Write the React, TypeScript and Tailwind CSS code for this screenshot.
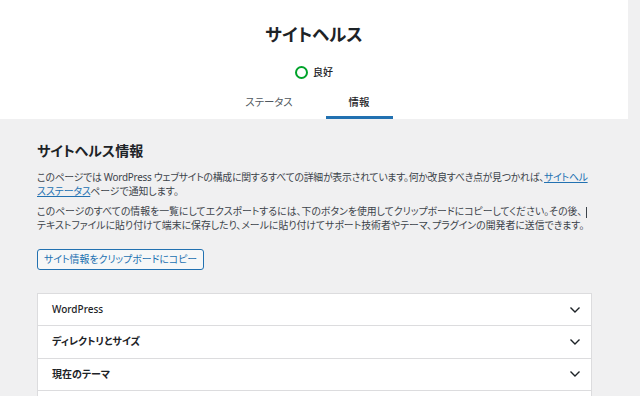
import type { JSX } from "react";

const sections = [
  "WordPress",
  "ディレクトリとサイズ",
  "現在のテーマ",
  "有効化中のプラグイン",
];

function Chevron(): JSX.Element {
  return (
    <svg width="12" height="8" viewBox="0 0 12 8" fill="none">
      <path d="M1.5 1.5L6 6L10.5 1.5" stroke="#1d2327" strokeWidth="1.4" />
    </svg>
  );
}

export default function App(): JSX.Element {
  return (
    <div className="h-[396px] w-[640px] overflow-hidden bg-[#f0f0f1] font-['Noto_Sans','Noto_Sans_CJK_JP',sans-serif] text-[#3c434a] [font-feature-settings:'palt']">
      <div className="w-[628px]">
        <header className="flex flex-col items-center bg-white pt-[22px]">
          <h1 className="text-[17.5px] leading-[24px] font-bold text-[#1d2327]">
            サイトヘルス
          </h1>
          <div className="mt-[19px] flex h-[14px] items-center gap-[5px]">
            <span className="h-[13px] w-[13px] rounded-full border-2 border-[#00a32a]" />
            <span className="text-[10px] font-medium text-[#1d2327]">良好</span>
          </div>
          <nav className="mt-[7px] flex gap-[23px] text-[10.4px]">
            <div className="flex h-[33px] w-[67px] items-center justify-center border-b-[3px] border-transparent pt-[3px] text-[#50575e]">
              ステータス
            </div>
            <div className="flex h-[33px] w-[67px] items-center justify-center border-b-[3px] border-[#2271b1] pt-[3px] font-medium text-[#1d2327]">
              情報
            </div>
          </nav>
        </header>
        <main className="px-[37px] pt-[22px]">
          <h2 className="text-[14px] leading-[20px] font-bold text-[#1d2327]">
            サイトヘルス情報
          </h2>
          <p className="mt-[10px] text-[9.9px] leading-[13.5px] whitespace-nowrap">
            <span className="tracking-[-0.25px]">
              このページでは WordPress
              ウェブサイトの構成に関するすべての詳細が表示されています。何か改良すべき点が見つかれば、
              <a className="text-[#2271b1] underline">サイトヘル</a>
            </span>
            <br />
            <a className="text-[#2271b1] underline">スステータス</a>
            ページで通知します。
          </p>
          <p className="mt-[7px] text-[9.9px] leading-[13.5px] whitespace-nowrap">
            このページのすべての情報を一覧にしてエクスポートするには、下のボタンを使用してクリップボードにコピーしてください。その後、
            <span className="ml-[4px] inline-block h-[11px] w-px bg-[#3c434a] align-middle" />
            <br />
            テキストファイルに貼り付けて端末に保存したり、メールに貼り付けてサポート技術者やテーマ、プラグインの開発者に送信できます。
          </p>
          <button className="mt-[17px] flex h-[21px] items-center rounded-[3px] border border-[#2271b1] bg-[#f6f7f7] px-[6px] text-[9.9px] text-[#2271b1]">
            サイト情報をクリップボードにコピー
          </button>
          <div className="mt-[23px] w-[555px] border border-[#dcdcde] bg-white">
            {sections.map((s) => (
              <div
                key={s}
                className="flex h-[32.3px] items-center justify-between border-b border-[#dcdcde] pr-[10px] pl-[14px] text-[10px] font-semibold text-[#1d2327]"
              >
                <span className={s === "WordPress" ? "font-medium" : ""}>{s}</span>
                <Chevron />
              </div>
            ))}
          </div>
        </main>
      </div>
    </div>
  );
}
